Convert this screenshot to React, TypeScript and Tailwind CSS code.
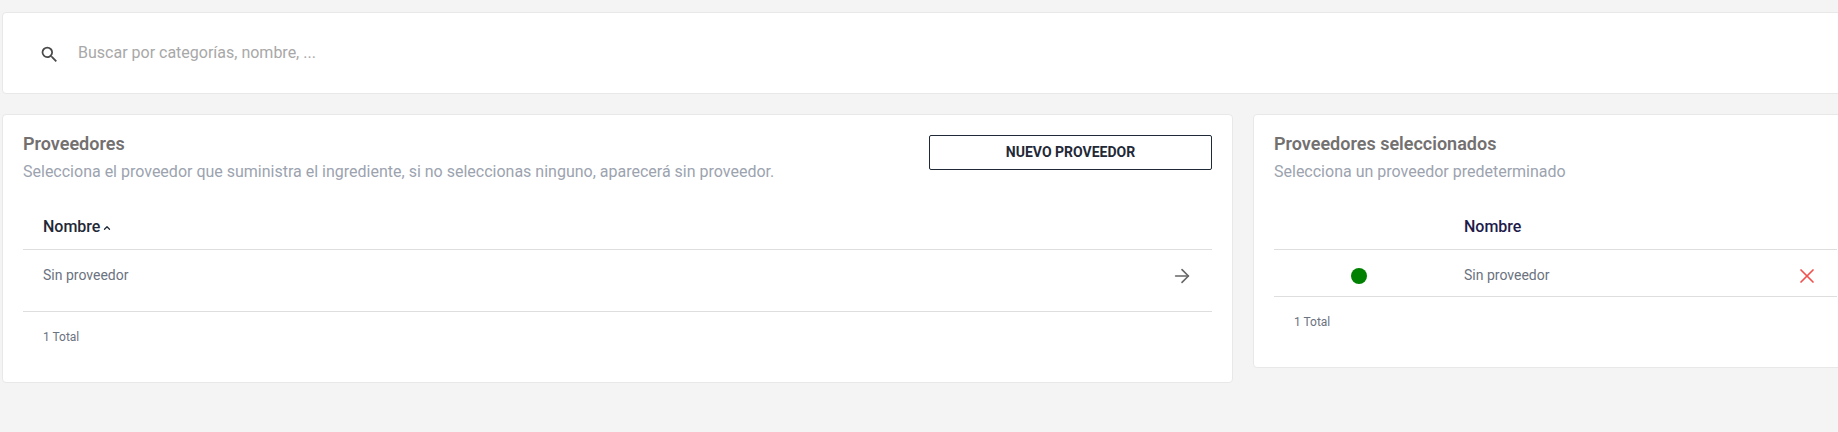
import { ArrowRight, ChevronUp, X } from "lucide-react";

function SearchIcon() {
  return (
    <svg width="21" height="21" viewBox="0 0 24 24" fill="currentColor" className="mt-[3px] shrink-0 text-[#4a4a4a]">
      <path d="M15.5 14h-.79l-.28-.27A6.471 6.471 0 0 0 16 9.5 6.5 6.5 0 1 0 9.5 16c1.61 0 3.09-.59 4.23-1.57l.27.28v.79l5 4.99L20.49 19l-4.99-5zm-6 0C7.01 14 5 11.99 5 9.5S7.01 5 9.5 5 14 7.01 14 9.5 11.99 14 9.5 14z" />
    </svg>
  );
}

function CardTitle({ title, subtitle }: { title: string; subtitle: string }) {
  return (
    <div>
      <h2 className="text-[18px] leading-[24px] font-semibold text-[#737070]">{title}</h2>
      <p className="mt-[4px] text-[16px] leading-[24px] text-[#9ca3af]">{subtitle}</p>
    </div>
  );
}

export default function App() {
  return (
    <div className="h-[432px] w-[1838px] overflow-hidden bg-[#f4f4f4] pt-[12px] pl-[2px] font-['Roboto',sans-serif]">
      {/* search */}
      <div className="flex h-[82px] w-[1860px] items-center rounded-[4px] border border-[#e8e8e8] bg-white pl-[36px]">
        <SearchIcon />
        <span className="ml-[18px] text-[16px] text-[#a8a8a8]">Buscar por categorías, nombre, ...</span>
      </div>

      <div className="mt-[20px] flex items-start gap-[20px]">
        {/* proveedores */}
        <div className="h-[269px] w-[1231px] shrink-0 rounded-[4px] border border-[#e8e8e8] bg-white pt-[17px] pr-[20px] pl-[20px]">
          <div className="flex items-start justify-between">
            <CardTitle
              title="Proveedores"
              subtitle="Selecciona el proveedor que suministra el ingrediente, si no seleccionas ninguno, aparecerá sin proveedor."
            />
            <button className="mt-[3px] h-[35px] w-[283px] rounded-[2px] border border-[#1f2937] text-[14px] font-bold text-[#1f2937]">
              NUEVO PROVEEDOR
            </button>
          </div>
          <div className="mt-[20px] flex h-[46px] items-center border-b border-[#dedede] pl-[20px] text-[16px] font-medium text-[#1f2937]">
            Nombre
            <ChevronUp size={10} strokeWidth={3} className="mt-[3px] ml-[2px]" />
          </div>
          <div className="flex h-[62px] items-start justify-between border-b border-[#dedede] pt-[15px] pr-[19px] pl-[20px] text-[14px] leading-[20px] text-[#6b7280]">
            Sin proveedor
            <ArrowRight size={22} strokeWidth={1.75} className="text-[#666666]" />
          </div>
          <div className="pt-[17px] pl-[20px] text-[12px] leading-[16px] text-[#6b7280]">1 Total</div>
        </div>

        {/* seleccionados */}
        <div className="h-[254px] w-[620px] shrink-0 rounded-[4px] border border-[#e8e8e8] bg-white pt-[17px] pl-[20px]">
          <CardTitle title="Proveedores seleccionados" subtitle="Selecciona un proveedor predeterminado" />
          <div className="w-[563px]">
            <div className="mt-[20px] flex h-[46px] items-center border-b border-[#dedede] pl-[190px] text-[16px] font-medium text-[#1e1b4b]">
              Nombre
            </div>
            <div className="flex h-[47px] items-start border-b border-[#dedede] pt-[15px] text-[14px] leading-[20px] text-[#6b7280]">
              <div className="flex w-[190px] shrink-0 justify-center pt-[3px] pr-[20px]">
                <span className="h-[16px] w-[16px] rounded-full bg-[#008000]" />
              </div>
              <span className="flex-1">Sin proveedor</span>
              <X size={24} strokeWidth={1.75} className="mt-[-1px] mr-[18px] text-[#ef5350]" />
            </div>
            <div className="pt-[17px] pl-[20px] text-[12px] leading-[16px] text-[#6b7280]">1 Total</div>
          </div>
        </div>
      </div>
    </div>
  );
}
